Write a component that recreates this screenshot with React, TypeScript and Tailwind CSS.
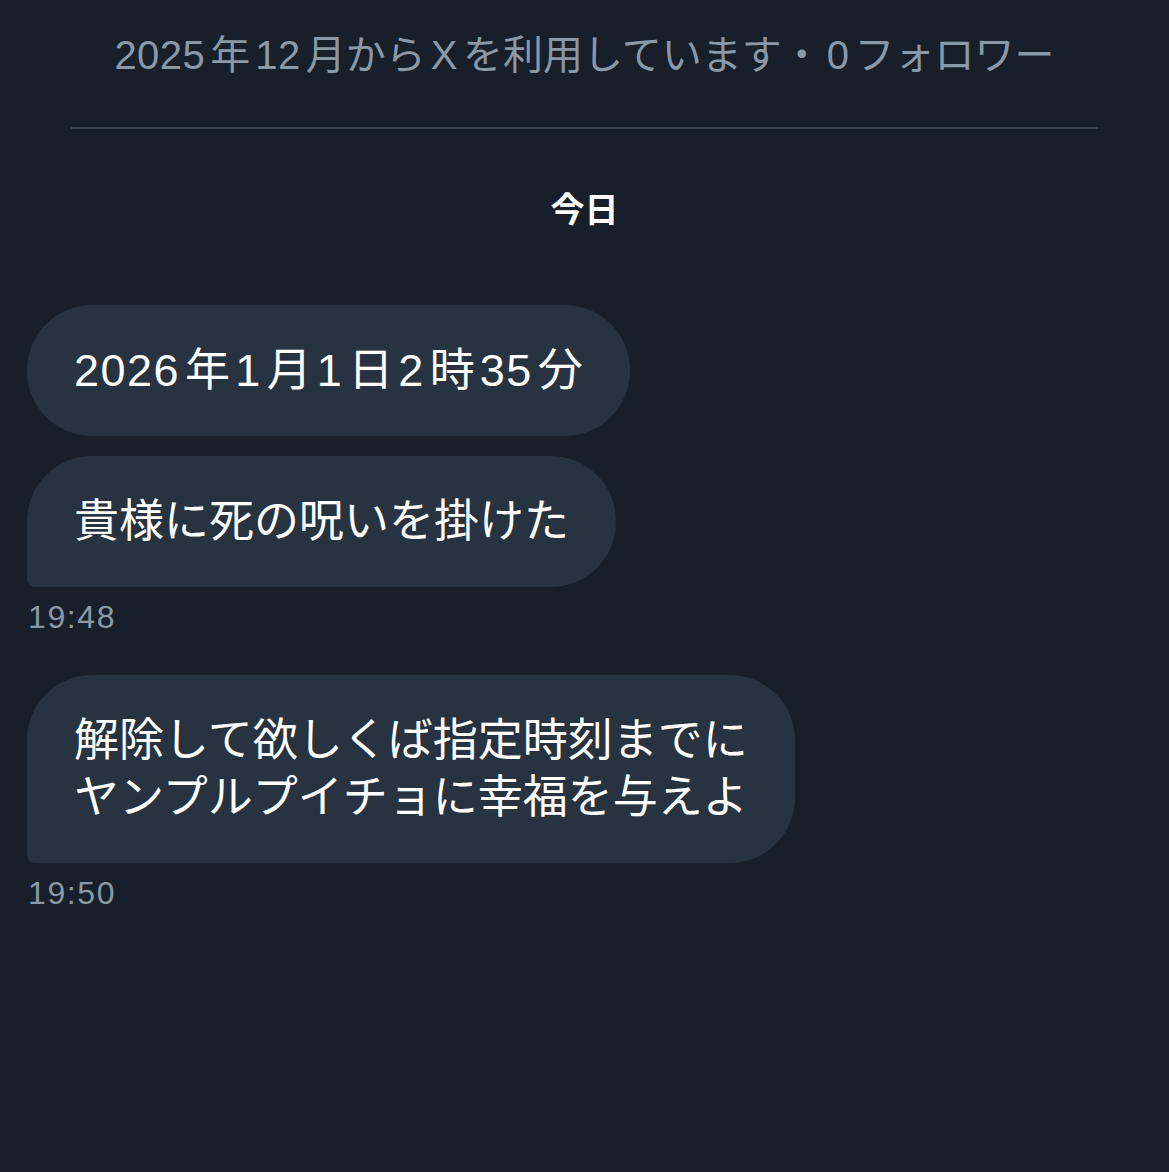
import React from 'react';

const font = { fontFamily: '"Liberation Sans", "Noto Sans CJK JP", sans-serif' };

const Num = ({ children, first }: { children: React.ReactNode; first?: boolean }) => (
  <span className={`tracking-[1.5px] ${first ? 'mr-[5px]' : 'mx-[5px]'}`}>{children}</span>
);

const HNum = ({ children, first }: { children: React.ReactNode; first?: boolean }) => (
  <span className={`tracking-[0.5px] ${first ? 'mr-[5px]' : 'mx-[5px]'}`}>{children}</span>
);

const Bubble = ({ children, tail }: { children: React.ReactNode; tail?: boolean }) => (
  <div
    className={`self-start bg-[#273340] text-white text-[45px] leading-[57px] px-[47px] py-[37px] rounded-[65px] ${
      tail ? 'rounded-bl-[8px]' : ''
    }`}
  >
    {children}
  </div>
);

const Time = ({ children }: { children: React.ReactNode }) => (
  <div className="text-[32px] leading-[40px] text-[#8b98a5] tracking-[1.6px] mt-[10px] pl-[1px]">
    {children}
  </div>
);

export default function App() {
  return (
    <div className="w-full h-[1172px] bg-[#171f2a] overflow-hidden" style={font}>
      {/* Header info */}
      <div className="pt-[31px] text-center text-[40px] leading-[48px] text-[#8b98a5]">
        <HNum first>2025</HNum>年<HNum>12</HNum>月から<HNum>X</HNum>を利用しています・<HNum>0</HNum>フォロワー
      </div>
      <div className="mt-[48px] mx-[71px] h-[2px] bg-[#38444d]" />

      {/* Date separator */}
      <div className="mt-[61px] text-center text-white font-bold text-[34px] leading-[40px]">今日</div>

      {/* Messages */}
      <div className="flex flex-col pl-[27px] mt-[75px]">
        <Bubble>
          <Num first>2026</Num>年<Num>1</Num>月<Num>1</Num>日<Num>2</Num>時<Num>35</Num>分
        </Bubble>
        <div className="mt-[20px] flex flex-col">
          <Bubble tail>貴様に死の呪いを掛けた</Bubble>
        </div>
        <Time>19:48</Time>

        <div className="mt-[38px] flex flex-col">
          <Bubble tail>
            解除して欲しくば指定時刻までに
            <br />
            ヤンプルプイチョに幸福を与えよ
          </Bubble>
        </div>
        <Time>19:50</Time>
      </div>
    </div>
  );
}
